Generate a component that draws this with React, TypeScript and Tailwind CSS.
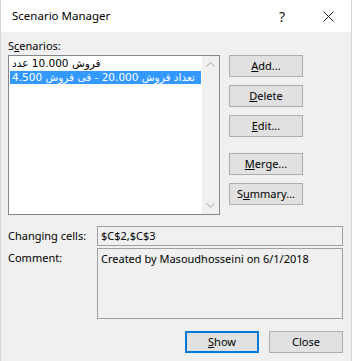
const font = "font-['Segoe_UI','Noto_Sans','DejaVu_Sans',sans-serif]"

function Btn({ children, primary }: { children: React.ReactNode; primary?: boolean }) {
  return (
    <div
      className={`flex h-[22px] w-[74px] items-center justify-center bg-[#e1e1e1] text-[11px] text-black ${
        primary ? "border-2 border-[#0078d7]" : "border border-[#adadad]"
      }`}
    >
      {children}
    </div>
  )
}

function Chevron({ up }: { up?: boolean }) {
  return (
    <svg width="9" height="5" viewBox="0 0 9 5" className="block">
      <path
        d={up ? "M0.5 4.5 L4.5 0.8 L8.5 4.5" : "M0.5 0.5 L4.5 4.2 L8.5 0.5"}
        fill="none"
        stroke="#c2c2c2"
        strokeWidth="1.2"
      />
    </svg>
  )
}

export default function App() {
  return (
    <div className={`h-[361px] w-[352px] bg-[#f0f0f0] border-x border-[#d4d4d4] ${font} text-black`}>
      <div className="flex h-[32px] items-center bg-white">
        <span className="pl-[11px] text-[11.5px]">Scenario Manager</span>
        <div className="ml-auto flex h-full">
          <div className="flex w-[46px] items-center justify-center text-[14px] text-[#222]">?</div>
          <div className="flex w-[46px] items-center justify-center">
            <svg width="11" height="11" viewBox="0 0 11 11">
              <path d="M0.5 0.5 L10.5 10.5 M10.5 0.5 L0.5 10.5" stroke="#222" strokeWidth="1" />
            </svg>
          </div>
        </div>
      </div>

      <div className="px-[7px]">
        <div className="pt-[6px] text-[11px] leading-[15px]">
          S<span className="underline">c</span>enarios:
        </div>

        <div className="mt-[2px] flex items-start">
          <div className="flex h-[160px] w-[212px] border border-[#828790] bg-white">
            <div className="min-w-0 flex-1 p-[1px] font-['DejaVu_Sans',sans-serif] text-[10.5px] leading-[13px] whitespace-nowrap">
              <div className="h-[14px] pl-[2px]">فروش 10.000 عدد</div>
              <div className="h-[13px] bg-[#3399ff] pl-[2px] text-white">تعداد فروش 20.000 - فی فروش 4.500</div>
            </div>
            <div className="flex w-[17px] flex-col items-center justify-between bg-[#f0f0f0] py-[6px]">
              <Chevron up />
              <Chevron />
            </div>
          </div>

          <div className="ml-[9px] flex flex-col">
            <Btn>
              <span className="underline">A</span>dd...
            </Btn>
            <div className="mt-[8px]">
              <Btn>
                <span className="underline">D</span>elete
              </Btn>
            </div>
            <div className="mt-[8px]">
              <Btn>
                <span className="underline">E</span>dit...
              </Btn>
            </div>
            <div className="mt-[16px]">
              <Btn>
                <span className="underline">M</span>erge...
              </Btn>
            </div>
            <div className="mt-[8px]">
              <Btn>
                S<span className="underline">u</span>mmary...
              </Btn>
            </div>
          </div>
        </div>

        <div className="mt-[11px] flex items-center pr-[1px] text-[11px]">
          <div className="w-[89px]">Changing cells:</div>
          <div className="flex h-[20px] flex-1 items-center border border-[#a0a0a0] pl-[3px]">$C$2,$C$3</div>
        </div>

        <div className="mt-[2px] flex pr-[1px] text-[11px]">
          <div className="w-[89px] pt-[2px]">Comment:</div>
          <div className="h-[71px] flex-1 border border-[#a0a0a0] pl-[3px] pt-[2px]">
            Created by Masoudhosseini on 6/1/2018
          </div>
        </div>

        <div className="mt-[12px] flex justify-end gap-[10px] pr-[1px]">
          <Btn primary>
            <span className="underline">S</span>how
          </Btn>
          <Btn>Close</Btn>
        </div>
      </div>
    </div>
  )
}
